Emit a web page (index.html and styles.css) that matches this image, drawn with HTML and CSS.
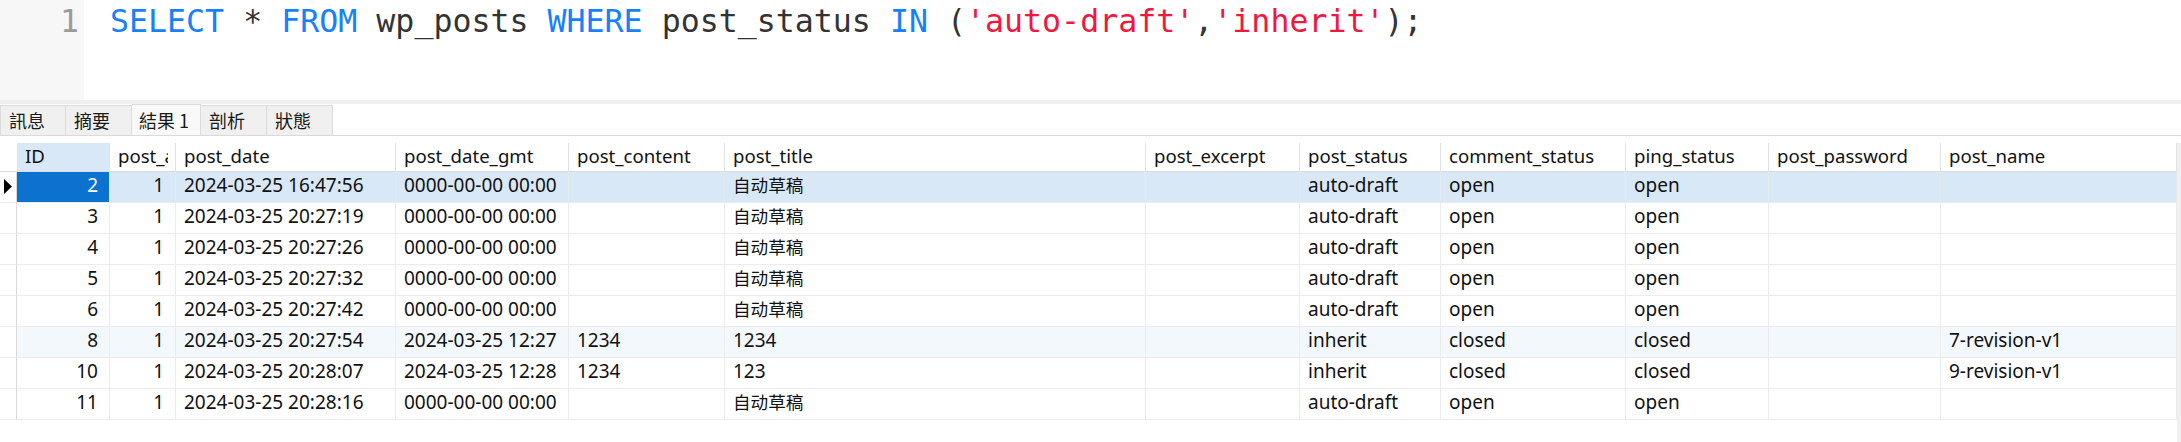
FILE: index.html
```html
<!DOCTYPE html>
<html lang="zh">
<head>
<meta charset="utf-8">
<title>Query</title>
<link rel="stylesheet" href="styles.css">
</head>
<body>
<div class="editor">
  <div class="gutter"><span>1</span></div>
  <div class="code"><span class="kw">SELECT</span> * <span class="kw">FROM</span> wp_posts <span class="kw">WHERE</span> post_status <span class="kw">IN</span> (<span class="str">'auto-draft'</span>,<span class="str">'inherit'</span>);</div>
</div>
<div class="splitter"></div>
<div class="tabs">
  <div class="tab">訊息</div>
  <div class="tab">摘要</div>
  <div class="tab active">結果 1</div>
  <div class="tab">剖析</div>
  <div class="tab">狀態</div>
</div>
<div class="result">
  <div class="grid">
    <div class="row head">
      <div class="c ind"></div>
      <div class="c sel-col"><span class="t">ID</span></div>
      <div class="c"><span class="t">post_author</span></div>
      <div class="c"><span class="t">post_date</span></div>
      <div class="c"><span class="t">post_date_gmt</span></div>
      <div class="c"><span class="t">post_content</span></div>
      <div class="c"><span class="t">post_title</span></div>
      <div class="c"><span class="t">post_excerpt</span></div>
      <div class="c"><span class="t">post_status</span></div>
      <div class="c"><span class="t">comment_status</span></div>
      <div class="c"><span class="t">ping_status</span></div>
      <div class="c"><span class="t">post_password</span></div>
      <div class="c"><span class="t">post_name</span></div>
    </div>
    <div class="row selected">
      <div class="c ind"><svg class="arrow" width="9" height="15" viewBox="0 0 9 15"><polygon points="0,0 8,7.5 0,15" fill="#000"/></svg></div>
      <div class="c r cur">2</div>
      <div class="c r">1</div>
      <div class="c">2024-03-25 16:47:56</div>
      <div class="c">0000-00-00 00:00</div>
      <div class="c"></div>
      <div class="c"><span class="cjk">自动草稿</span></div>
      <div class="c"></div>
      <div class="c">auto-draft</div>
      <div class="c">open</div>
      <div class="c">open</div>
      <div class="c"></div>
      <div class="c"></div>
    </div>
    <div class="row">
      <div class="c ind"></div>
      <div class="c r">3</div>
      <div class="c r">1</div>
      <div class="c">2024-03-25 20:27:19</div>
      <div class="c">0000-00-00 00:00</div>
      <div class="c"></div>
      <div class="c"><span class="cjk">自动草稿</span></div>
      <div class="c"></div>
      <div class="c">auto-draft</div>
      <div class="c">open</div>
      <div class="c">open</div>
      <div class="c"></div>
      <div class="c"></div>
    </div>
    <div class="row">
      <div class="c ind"></div>
      <div class="c r">4</div>
      <div class="c r">1</div>
      <div class="c">2024-03-25 20:27:26</div>
      <div class="c">0000-00-00 00:00</div>
      <div class="c"></div>
      <div class="c"><span class="cjk">自动草稿</span></div>
      <div class="c"></div>
      <div class="c">auto-draft</div>
      <div class="c">open</div>
      <div class="c">open</div>
      <div class="c"></div>
      <div class="c"></div>
    </div>
    <div class="row">
      <div class="c ind"></div>
      <div class="c r">5</div>
      <div class="c r">1</div>
      <div class="c">2024-03-25 20:27:32</div>
      <div class="c">0000-00-00 00:00</div>
      <div class="c"></div>
      <div class="c"><span class="cjk">自动草稿</span></div>
      <div class="c"></div>
      <div class="c">auto-draft</div>
      <div class="c">open</div>
      <div class="c">open</div>
      <div class="c"></div>
      <div class="c"></div>
    </div>
    <div class="row">
      <div class="c ind"></div>
      <div class="c r">6</div>
      <div class="c r">1</div>
      <div class="c">2024-03-25 20:27:42</div>
      <div class="c">0000-00-00 00:00</div>
      <div class="c"></div>
      <div class="c"><span class="cjk">自动草稿</span></div>
      <div class="c"></div>
      <div class="c">auto-draft</div>
      <div class="c">open</div>
      <div class="c">open</div>
      <div class="c"></div>
      <div class="c"></div>
    </div>
    <div class="row hover">
      <div class="c ind"></div>
      <div class="c r">8</div>
      <div class="c r">1</div>
      <div class="c">2024-03-25 20:27:54</div>
      <div class="c">2024-03-25 12:27</div>
      <div class="c">1234</div>
      <div class="c">1234</div>
      <div class="c"></div>
      <div class="c">inherit</div>
      <div class="c">closed</div>
      <div class="c">closed</div>
      <div class="c"></div>
      <div class="c">7-revision-v1</div>
    </div>
    <div class="row">
      <div class="c ind"></div>
      <div class="c r">10</div>
      <div class="c r">1</div>
      <div class="c">2024-03-25 20:28:07</div>
      <div class="c">2024-03-25 12:28</div>
      <div class="c">1234</div>
      <div class="c">123</div>
      <div class="c"></div>
      <div class="c">inherit</div>
      <div class="c">closed</div>
      <div class="c">closed</div>
      <div class="c"></div>
      <div class="c">9-revision-v1</div>
    </div>
    <div class="row">
      <div class="c ind"></div>
      <div class="c r">11</div>
      <div class="c r">1</div>
      <div class="c">2024-03-25 20:28:16</div>
      <div class="c">0000-00-00 00:00</div>
      <div class="c"></div>
      <div class="c"><span class="cjk">自动草稿</span></div>
      <div class="c"></div>
      <div class="c">auto-draft</div>
      <div class="c">open</div>
      <div class="c">open</div>
      <div class="c"></div>
      <div class="c"></div>
    </div>
  </div>
  <div class="vscroll"></div>
</div>
</body>
</html>
```

FILE: styles.css
```css
html, body {
  margin: 0;
  padding: 0;
  background: #ffffff;
}
body {
  width: 2181px;
  height: 442px;
  overflow: hidden;
  display: flex;
  flex-direction: column;
}

/* ---------- SQL editor ---------- */
.editor {
  display: flex;
  height: 100px;
  flex: none;
  background: #ffffff;
}
.gutter {
  width: 84px;
  background: #f7f7f7;
  box-sizing: border-box;
  padding: 1px 5px 0 0;
  text-align: right;
  font-family: "DejaVu Sans Mono", "Liberation Mono", monospace;
  font-size: 31.6px;
  line-height: 40px;
  color: #9b9b9b;
}
.code {
  padding: 1px 0 0 26px;
  font-family: "DejaVu Sans Mono", "Liberation Mono", monospace;
  font-size: 31.6px;
  line-height: 40px;
  color: #333333;
  white-space: pre;
}
.kw { color: #1780fb; }
.str { color: #f2173f; }

.splitter {
  height: 4px;
  flex: none;
  background: #efefef;
}

/* ---------- tabs ---------- */
.tabs {
  display: flex;
  align-items: flex-end;
  height: 31px;
  flex: none;
  border-bottom: 1px solid #dadada;
  font-family: "Noto Sans CJK TC", "Noto Sans", sans-serif;
  font-size: 18px;
  color: #1a1a1a;
}
.tab {
  box-sizing: border-box;
  height: 30px;
  min-width: 66px;
  padding: 0 8px;
  line-height: 29px;
  background: #f0f0f0;
  border: 1px solid #dcdcdc;
  border-bottom: none;
}
.tab + .tab {
  border-left: none;
}
.tab.active {
  height: 31px;
  min-width: 69px;
  padding: 0 10px 0 7px;
  background: #f9f9f9;
  line-height: 30px;
}

/* ---------- result grid ---------- */
.result {
  flex: 1;
  display: flex;
  padding-top: 7px;
  font-family: "Noto Sans", "Noto Sans CJK SC", sans-serif;
  font-size: 19px;
  color: #111111;
}
.grid {
  width: 2177px;
  flex: none;
}
.vscroll {
  flex: 1;
  background: #f0f0f0;
}
.row {
  display: grid;
  grid-template-columns: 17px 93px 66px 220px 173px 156px 421px 154px 141px 185px 143px 172px 236px;
}
.c {
  box-sizing: border-box;
  height: 31px;
  padding: 0 7px 4px 8px;
  line-height: 26px;
  border-right: 1px solid #ececec;
  border-bottom: 1px solid #ececec;
  white-space: nowrap;
  overflow: hidden;
}
.c.r {
  text-align: right;
  padding-right: 11px;
}
.c.ind {
  padding: 0;
  border-right-color: #d9d9d9;
  display: flex;
  align-items: center;
}
.arrow {
  margin-left: 4px;
  margin-top: -1px;
}
.t {
  display: block;
  overflow: hidden;
  font-size: 18.6px;
}
.cjk {
  font-family: "Noto Sans CJK SC", sans-serif;
  font-size: 17.6px;
}

.head .c {
  height: 29px;
  padding-bottom: 2px;
  border-right-color: #e2e2e2;
  border-bottom-color: #dcdcdc;
}
.head .c.ind {
  border-right-color: transparent;
}
.head .sel-col {
  background: #d9e8f7;
}

.selected .c {
  background: #d9e8f7;
  border-right-color: #e4e9ee;
}
.selected .c.ind {
  background: #ffffff;
  border-right-color: #d9d9d9;
}
.selected .c.cur {
  background: #0b72cf;
  color: #ffffff;
}
.hover .c {
  background: #f3f8fd;
}
.hover .c.ind {
  background: #ffffff;
}
```
